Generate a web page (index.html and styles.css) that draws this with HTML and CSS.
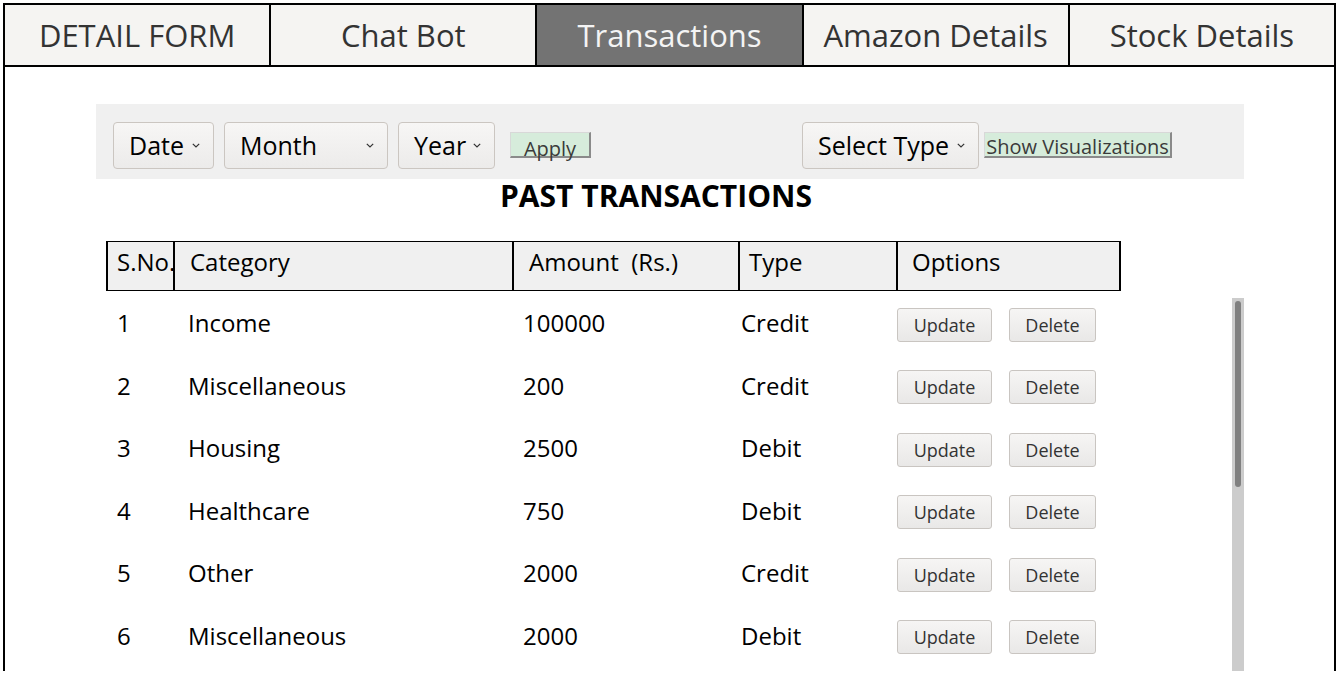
FILE: index.html
```html
<!DOCTYPE html>
<html lang="en">
<head>
<meta charset="utf-8">
<title>Transactions</title>
<link rel="stylesheet" href="styles.css">
</head>
<body>
<div class="frame">
  <nav class="tabs">
    <div class="tab">DETAIL FORM</div>
    <div class="tab">Chat Bot</div>
    <div class="tab active">Transactions</div>
    <div class="tab">Amazon Details</div>
    <div class="tab">Stock Details</div>
  </nav>
  <main class="content">
    <div class="filters">
      <div class="select w-date"><span>Date</span><svg class="chev" width="8" height="5" viewBox="0 0 8 5"><path d="M0.8 0.8 L4 4 L7.2 0.8" fill="none" stroke="#333" stroke-width="1.2"/></svg></div>
      <div class="select w-month"><span>Month</span><svg class="chev" width="8" height="5" viewBox="0 0 8 5"><path d="M0.8 0.8 L4 4 L7.2 0.8" fill="none" stroke="#333" stroke-width="1.2"/></svg></div>
      <div class="select w-year"><span>Year</span><svg class="chev" width="8" height="5" viewBox="0 0 8 5"><path d="M0.8 0.8 L4 4 L7.2 0.8" fill="none" stroke="#333" stroke-width="1.2"/></svg></div>
      <button class="flat apply">Apply</button>
      <div class="select w-type"><span>Select Type</span><svg class="chev" width="8" height="5" viewBox="0 0 8 5"><path d="M0.8 0.8 L4 4 L7.2 0.8" fill="none" stroke="#333" stroke-width="1.2"/></svg></div>
      <button class="flat viz">Show Visualizations</button>
    </div>
    <h2 class="title">PAST TRANSACTIONS</h2>
    <div class="thead">
      <div class="th c1">S.No.</div>
      <div class="th c2">Category</div>
      <div class="th c3">Amount&nbsp; (Rs.)</div>
      <div class="th c4">Type</div>
      <div class="th c5">Options</div>
    </div>
    <div class="tbody">
      <div class="rows">
        <div class="row"><span>1</span><span>Income</span><span>100000</span><span>Credit</span><span class="opts"><button class="btn upd">Update</button><button class="btn del">Delete</button></span></div>
        <div class="row"><span>2</span><span>Miscellaneous</span><span>200</span><span>Credit</span><span class="opts"><button class="btn upd">Update</button><button class="btn del">Delete</button></span></div>
        <div class="row"><span>3</span><span>Housing</span><span>2500</span><span>Debit</span><span class="opts"><button class="btn upd">Update</button><button class="btn del">Delete</button></span></div>
        <div class="row"><span>4</span><span>Healthcare</span><span>750</span><span>Debit</span><span class="opts"><button class="btn upd">Update</button><button class="btn del">Delete</button></span></div>
        <div class="row"><span>5</span><span>Other</span><span>2000</span><span>Credit</span><span class="opts"><button class="btn upd">Update</button><button class="btn del">Delete</button></span></div>
        <div class="row"><span>6</span><span>Miscellaneous</span><span>2000</span><span>Debit</span><span class="opts"><button class="btn upd">Update</button><button class="btn del">Delete</button></span></div>
      </div>
      <div class="sbar"><div class="thumb"></div></div>
    </div>
  </main>
</div>
</body>
</html>
```

FILE: styles.css
```css
html, body {
  margin: 0;
  padding: 0;
  overflow: hidden;
  background: #ffffff;
  height: 673px;
}
body {
  font-family: "Open Sans", "Noto Sans", sans-serif;
  color: #000;
}
.frame {
  margin: 3px 1px 0 3px;
  border: 2px solid #000;
  border-bottom: none;
  height: 668px;
  box-sizing: border-box;
  overflow: hidden;
}
.tabs {
  display: flex;
  border-bottom: 2px solid #000;
}
.tab {
  flex: 1 1 0;
  height: 60px;
  display: flex;
  align-items: center;
  justify-content: center;
  background: #f5f4f2;
  color: #333;
  font-size: 31px;
  padding-bottom: 1px;
  box-sizing: border-box;
  white-space: nowrap;
}
.tab + .tab {
  border-left: 2px solid #000;
}
.tab.active {
  background: #737373;
  color: #f4f4f4;
}
.content {
  padding: 37px 90px 0 91px;
}
.filters {
  background: #f0f0f0;
  height: 75px;
  box-sizing: border-box;
  padding: 18px 0 0 17px;
  display: flex;
  align-items: flex-start;
}
.select {
  height: 47px;
  box-sizing: border-box;
  border: 1px solid #cbc6c1;
  border-radius: 4px;
  background: linear-gradient(#f7f6f5, #ecebea);
  display: flex;
  align-items: center;
  justify-content: space-between;
  padding: 0 13px 1px 15px;
  font-size: 25px;
  color: #000;
  margin-right: 10px;
  white-space: nowrap;
}
.chev {
  margin-top: 1px;
}
.w-date { width: 101px; }
.w-month { width: 164px; }
.w-year { width: 97px; }
.w-type { width: 177px; margin-left: 211px; margin-right: 5px; }
.flat {
  font-family: "Open Sans", "Noto Sans", sans-serif;
  height: 26px;
  box-sizing: border-box;
  margin-top: 10px;
  background: #d6ecdb;
  border-style: solid;
  border-width: 1px 2px 2px 1px;
  border-color: #d8d8d8 #8a8a8a #8a8a8a #d8d8d8;
  color: #3a3a3a;
  font-size: 20px;
  line-height: 22px;
  padding: 5px 0 0 0;
  overflow: visible;
  white-space: nowrap;
  display: flex;
  justify-content: center;
  align-items: flex-start;
}
.apply {
  width: 81px;
  margin-left: 5px;
}
.viz {
  width: 188px;
  font-size: 20px;
  padding-top: 3px;
}
.title {
  margin: 0;
  height: 34px;
  font-size: 30px;
  line-height: 34px;
  font-weight: 700;
  text-align: center;
  padding-right: 28px;
}
.thead {
  margin: 28px 0 0 10px;
  width: 1015px;
  height: 50px;
  box-sizing: border-box;
  display: grid;
  grid-template-columns: 67px 339px 226px 158px 225px;
  border-top: 1px solid #000;
  border-bottom: 1px solid #000;
  background: #f0f0f0;
}
.th {
  border-left: 2px solid #000;
  font-size: 24px;
  display: flex;
  align-items: center;
  padding-bottom: 9px;
  white-space: nowrap;
  overflow: visible;
  color: #000;
}
.th.c5 { border-right: 2px solid #000; }
.c1 { padding-left: 9px; }
.c2 { padding-left: 15px; }
.c3 { padding-left: 15px; }
.c4 { padding-left: 9px; }
.c5 { padding-left: 14px; }
.tbody {
  margin-top: 2px;
  display: flex;
  height: 420px;
  overflow: hidden;
}
.rows {
  flex: 1 1 auto;
  padding-left: 21px;
}
.sbar {
  flex: 0 0 auto;
  width: 12px;
  margin-top: 5px;
  background: #cccccc;
  padding: 3px;
  box-sizing: border-box;
}
.thumb {
  height: 186px;
  background: #808080;
  border-radius: 3px;
}
.row {
  height: 62.5px;
  display: grid;
  grid-template-columns: 71px 335px 218px 156px 220px;
  align-items: center;
  font-size: 24px;
  color: #000;
  white-space: nowrap;
}
.row > span {
  padding-bottom: 3px;
}
.opts {
  display: flex;
  gap: 17px;
  padding-top: 4px;
}
.btn {
  font-family: "Open Sans", "Noto Sans", sans-serif;
  height: 34px;
  box-sizing: border-box;
  border: 1px solid #c9c5c1;
  border-radius: 3px;
  background: linear-gradient(#f6f5f4, #e9e8e7);
  color: #333;
  font-size: 18px;
  padding: 0;
}
.upd { width: 95px; }
.del { width: 87px; }
```
